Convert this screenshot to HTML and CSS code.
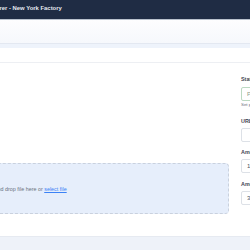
FILE: index.html
```html
<!DOCTYPE html>
<html>
<head>
<meta charset="utf-8">
<link rel="stylesheet" href="styles.css">
</head>
<body>
<div class="page">
  <header class="navbar">
    <span class="nav-title">Manufacturer - New York Factory</span>
  </header>
  <div class="subbar"></div>
  <div class="band"></div>
  <div class="spacer"></div>
  <main class="body">
    <section class="left">
      <div class="dropzone">
        <span>Drag and drop file here or <a href="#" class="link">select file</a></span>
      </div>
    </section>
    <aside class="right">
      <div class="field">
        <label class="label">Status</label>
        <div class="input input-status">Pending</div>
        <div class="help">Set production status</div>
      </div>
      <div class="field f-url">
        <label class="label">URL</label>
        <div class="input"></div>
      </div>
      <div class="field f-a1">
        <label class="label">Amount</label>
        <div class="input">1</div>
      </div>
      <div class="field f-a2">
        <label class="label">Amount</label>
        <div class="input">3</div>
      </div>
    </aside>
  </main>
  <footer class="footer"></footer>
</div>
</body>
</html>
```

FILE: styles.css
```css
html, body {
  margin: 0;
  padding: 0;
  overflow: hidden;
  background: #ffffff;
  font-family: "Liberation Sans", Arial, sans-serif;
}
.page {
  width: 540px;
  margin-left: -220px;
}
.navbar {
  height: 19px;
  background: #1f2c44;
  border-bottom: 1px solid #b9c1cd;
  display: flex;
  align-items: center;
  padding-left: 190px;
}
.nav-title {
  color: #e6eaf0;
  font-size: 5.9px;
  font-weight: bold;
  position: relative;
  top: -2px;
}
.subbar {
  height: 23px;
  background: linear-gradient(#fdfdfe, #f6f8fc);
  border-bottom: 1px solid #e3e8f1;
}
.band {
  height: 4px;
  background: #eef3fb;
}
.spacer {
  height: 14px;
  border-bottom: 1px solid #edeff3;
}
.body {
  display: flex;
  align-items: flex-start;
  gap: 12px;
  padding: 12px 9px 0 39px;
}
.left {
  flex: 1;
  padding-top: 88px;
  padding-bottom: 22px;
}
.dropzone {
  height: 49px;
  background: #e6eefb;
  border: 1px dashed #c9d1de;
  border-radius: 4px;
  display: flex;
  align-items: center;
  justify-content: center;
  font-size: 5.4px;
  color: #6b7280;
}
.link {
  color: #3b82f6;
  text-decoration: underline;
}
.right {
  width: 70px;
}
.field {
  display: flex;
  flex-direction: column;
}
.label {
  font-size: 5.4px;
  font-weight: bold;
  color: #3f4654;
  line-height: 8px;
  margin-bottom: 4px;
}
.input {
  height: 12px;
  border: 1px solid #dde1e7;
  border-radius: 2px;
  font-size: 6px;
  color: #4b5563;
  line-height: 12px;
  padding-left: 5px;
}
.input-status {
  border-color: #bcd9c2;
  color: #8a9a8c;
}
.help {
  font-size: 4.4px;
  color: #6b7280;
  line-height: 6px;
  margin-top: 1px;
}
.f-url { margin-top: 9px; }
.f-a1 { margin-top: 6px; }
.f-a2 { margin-top: 7px; }
.f-url .label, .f-a1 .label, .f-a2 .label { margin-bottom: 3px; }
.footer {
  height: 20px;
  background: #eef2f9;
  border-top: 1px solid #e6eaf1;
}
```
